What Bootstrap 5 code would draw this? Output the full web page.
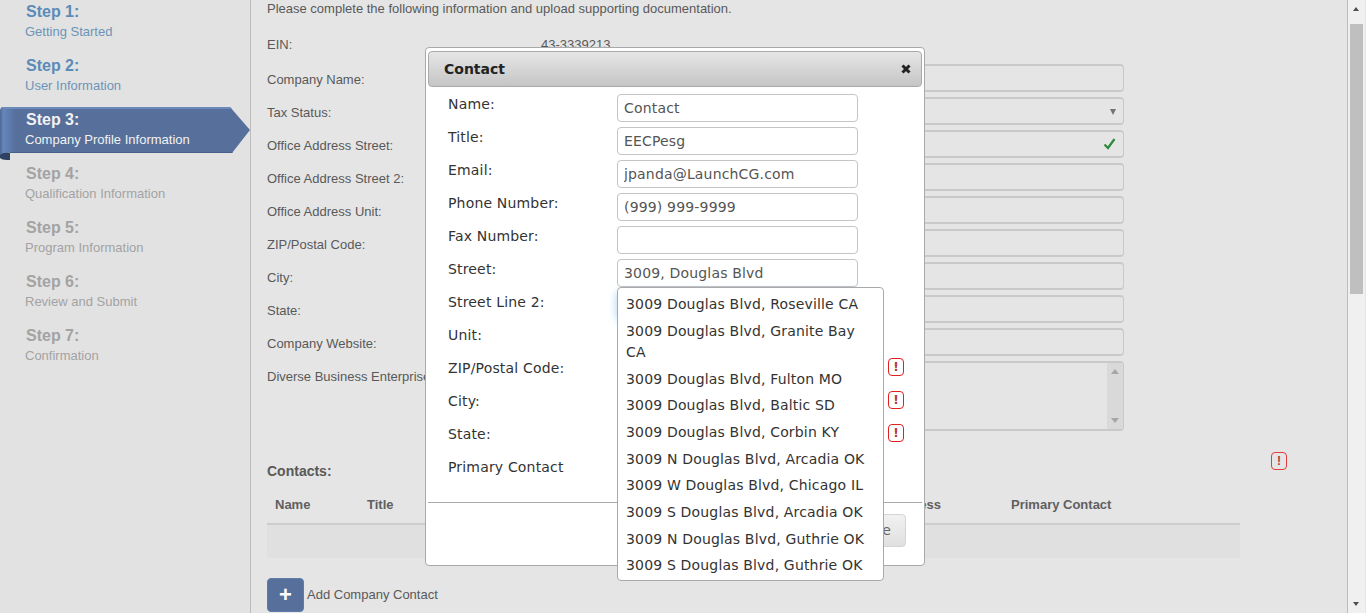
<!DOCTYPE html>
<html lang="en">
<head>
  <meta charset="UTF-8">
  <title>Company Profile Information</title>
  <link href="https://cdn.jsdelivr.net/npm/bootstrap@5.3.0/dist/css/bootstrap.min.css" rel="stylesheet">
  <style>
    html, body { height: 100%; }
    body {
      background: #e5e5e5;
      color: #595959;
      font-family: "Liberation Sans", Arial, sans-serif;
      font-size: 13px;
      overflow: hidden;
    }
    .page-shell { height: 613px; overflow: hidden; }

    /* left wizard */
    .wizard-side {
      width: 251px;
      flex: none;
      background: #e2e2e2;
      border-right: 1px solid #bcbcbc;
    }
    .wizard-step {
      height: 46px;
      margin-bottom: 8px;
      padding: 4px 0 0 25px;
      color: #a3a3a3;
      position: relative;
    }
    .wizard-step:first-child { margin-top: -1px; }
    .wizard-step b { display: block; font-size: 16px; line-height: 18px; padding-left: 1px; }
    .wizard-step span { display: block; font-size: 13px; line-height: 18px; margin-top: 2px; }
    .wizard-step.is-done b { color: #5b8bb8; }
    .wizard-step.is-done span { color: #6d94b8; }
    .wizard-step.is-active { color: #f2f2f2; width: 251px; }
    .wizard-step.is-active > * { position: relative; }
    .wizard-step.is-active svg { position: absolute; left: 0; top: 0; }

    /* form behind the dialog */
    .form-area { width: 1097px; flex: none; padding: 0 16px; border-right: 1px solid #bcbcbc; position: relative; }
    .intro-line { line-height: 16px; margin: 0 0 18px; padding-top: 1px; }
    .ein-row { height: 16px; margin-bottom: 13px; }
    .ein-value { padding-left: 6px; }
    .field-row { height: 28px; margin-bottom: 5px; width: 857px; }
    .field-label { width: 268px; flex: none; padding-top: 4px; }
    .field-box {
      height: 28px;
      padding: 0 6px;
      background: transparent;
      border: 1px solid #c9c9c9;
      border-width: 2px 1px 2px 1px;
      border-radius: 4px;
      font-size: 13px;
      position: relative;
      flex: 1;
    }
    .area-row { height: 70px; width: 857px; }
    .area-row .field-label { padding-top: 6px; white-space: nowrap; }
    .area-box { height: 70px; padding: 0; display: flex; justify-content: flex-end; }
    .area-scroll { width: 16px; background: #d9d9d9; display: flex; flex-direction: column; justify-content: space-between; align-items: center; padding: 6px 0; }
    .tiny-up { width: 0; height: 0; border: 4px solid transparent; border-top: 0; border-bottom: 5px solid #a6a6a6; }
    .tiny-down { width: 0; height: 0; border: 4px solid transparent; border-bottom: 0; border-top: 5px solid #a6a6a6; }
    .select-arrow { position: absolute; right: 7px; top: 10px; width: 0; height: 0; border: 3.5px solid transparent; border-bottom: 0; border-top: 6px solid #737373; }
    .ok-mark { position: absolute; right: 7px; top: 5px; }

    .contacts-title { font-weight: 700; font-size: 14px; line-height: 16px; margin: 32px 0 17px; }
    .contacts-table { width: 973px; margin: 0; table-layout: fixed; --bs-table-bg: transparent; }
    .contacts-table th {
      color: #5f5f5f;
      font-size: 13px;
      line-height: 16px;
      padding: 1px 8px 10px;
      border-bottom: 2px solid #cdcdcd;
    }
    .contacts-table td { height: 34px; background: #e0e0e0; border: 0; padding: 0; }
    .add-row { margin-top: 20px; }
    .add-btn {
      width: 37px;
      height: 34px;
      padding: 0;
      background: #56709b;
      border: 1px solid #5f7ca8;
      border-radius: 4px;
      color: #fff;
      font-size: 22px;
      font-weight: 700;
      line-height: 30px;
    }
    .add-label { margin-left: 3px; }
    .alert-mark {
      width: 16px;
      height: 18px;
      flex: none;
      border: 1px solid #e11f1f;
      border-radius: 4px;
      color: #b23a3a;
      font-size: 12px;
      font-weight: 700;
      line-height: 16px;
      text-align: center;
      display: block;
    }
    .contacts-alert { position: absolute; left: 1020px; top: 452px; border-color: #e33d3d; }

    /* page scrollbar */
    .page-scroll { width: 17px; flex: none; background: #f0f0f0; padding: 24px 2px 0; position: relative; }
    .page-thumb { height: 270px; background: #bfbfbf; }
    .page-scroll-up { position: absolute; left: 5px; top: 7px; width: 0; height: 0; border: 3.5px solid transparent; border-top: 0; border-bottom: 4px solid #505050; }
    .page-scroll-down { position: absolute; left: 5px; bottom: 7px; width: 0; height: 0; border: 3.5px solid transparent; border-bottom: 0; border-top: 4px solid #505050; }

    /* dialog */
    .contact-dialog {
      position: absolute;
      left: 425px;
      top: 47px;
      width: 500px;
      height: 519px;
      background: #fff;
      border: 1px solid #a9a9a9;
      border-radius: 4px;
      padding: 3px 2px;
      font-family: "DejaVu Sans", Verdana, sans-serif;
      color: #333;
    }
    .dialog-head {
      height: 36px;
      padding: 0 10px 0 15px;
      background: linear-gradient(#e6e6e6, #c5c5c5);
      border: 1px solid #a9a9a9;
      border-radius: 4px;
      color: #222;
      font-size: 14px;
      font-weight: 700;
    }
    .dialog-close { width: 10px; height: 10px; }
    .dialog-body { padding: 7px 0 0 20px; height: 416px; border-bottom: 1px solid #a9a9a9; }
    .dialog-row { height: 28px; margin-bottom: 5px; }
    .dialog-row label { width: 169px; flex: none; font-size: 14px; letter-spacing: .17px; line-height: 20px; align-self: flex-start; color: #333; }
    .dialog-input {
      width: 241px;
      height: 28px;
      flex: none;
      padding: 0 6px;
      border: 1px solid #c4c4c4;
      border-radius: 4px;
      color: #555;
      font-size: 14px;
      letter-spacing: .17px;
      font-family: "DejaVu Sans", Verdana, sans-serif;
    }
    .dialog-input.is-focused { box-shadow: 0 0 8px rgba(102, 175, 233, .6); border-color: #66afe9; }
    .dialog-alert { margin-left: 30px; }
    .dialog-foot { padding: 11px 16px 0 0; }
    .save-btn {
      width: 65px;
      height: 33px;
      padding: 0;
      background: linear-gradient(#f1f1f1, #e0e0e0);
      border: 1px solid #d4d4d4;
      border-radius: 4px;
      color: #666;
      font-size: 14px;
      letter-spacing: .17px;
      font-family: "DejaVu Sans", Verdana, sans-serif;
    }

    /* address suggestions */
    .address-menu {
      position: absolute;
      left: 617px;
      top: 287px;
      width: 267px;
      height: 294px;
      padding-top: 3.6px;
      background: #fff;
      border: 1px solid #a9a9a9;
      border-radius: 4px;
      --bs-list-group-border-width: 0;
      --bs-list-group-bg: transparent;
    }
    .address-menu .list-group-item {
      padding: 2.83px 8px;
      color: #333;
      font-family: "DejaVu Sans", Verdana, sans-serif;
      font-size: 14px;
      letter-spacing: .17px;
      line-height: 21px;
    }
  </style>
</head>
<body>
  <div class="page-shell d-flex">
    <div class="wizard-side">
      <div class="wizard-step is-done"><b>Step 1:</b><span>Getting Started</span></div>
      <div class="wizard-step is-done"><b>Step 2:</b><span>User Information</span></div>
      <div class="wizard-step is-active">
        <svg width="251" height="54" viewBox="0 0 251 54">
          <defs>
            <linearGradient id="ribbonFill" x1="0" x2="16" y1="0" y2="0" gradientUnits="userSpaceOnUse">
              <stop offset="0" stop-color="#4d6695"/>
              <stop offset=".2" stop-color="#6686bd"/>
              <stop offset="1" stop-color="#566f9b"/>
            </linearGradient>
          </defs>
          <path d="M0 47C3 45 8 45 10 46V53C6 53 2 53 0 51Z" fill="#2f4160"/>
          <path d="M0 4C0 2 1 0 3 0H230L250 23L232 46H10C6 45 2 46 0 48Z" fill="url(#ribbonFill)"/>
          <path d="M3 0H230L232 2H3Z" fill="#6b89ba"/>
          <path d="M10 45H233L232 46H10Z" fill="#46608c"/>
        </svg>
        <b>Step 3:</b><span>Company Profile Information</span>
      </div>
      <div class="wizard-step"><b>Step 4:</b><span>Qualification Information</span></div>
      <div class="wizard-step"><b>Step 5:</b><span>Program Information</span></div>
      <div class="wizard-step"><b>Step 6:</b><span>Review and Submit</span></div>
      <div class="wizard-step"><b>Step 7:</b><span>Confirmation</span></div>
    </div>

    <div class="form-area">
      <p class="intro-line">Please complete the following information and upload supporting documentation.</p>
      <div class="ein-row d-flex"><div class="field-label p-0">EIN:</div><div class="ein-value">43-3339213</div></div>
      <div class="field-row d-flex align-items-center"><div class="field-label">Company Name:</div><div class="field-box form-control"></div></div>
      <div class="field-row d-flex align-items-center"><div class="field-label">Tax Status:</div><div class="field-box form-control"><i class="select-arrow"></i></div></div>
      <div class="field-row d-flex align-items-center"><div class="field-label">Office Address Street:</div>
        <div class="field-box form-control">
          <svg class="ok-mark" width="13" height="13" viewBox="0 0 13 13"><path d="M1.5 7.5L5 11L11.5 2" fill="none" stroke="#2e8b3d" stroke-width="2.2"/></svg>
        </div>
      </div>
      <div class="field-row d-flex align-items-center"><div class="field-label">Office Address Street 2:</div><div class="field-box form-control"></div></div>
      <div class="field-row d-flex align-items-center"><div class="field-label">Office Address Unit:</div><div class="field-box form-control"></div></div>
      <div class="field-row d-flex align-items-center"><div class="field-label">ZIP/Postal Code:</div><div class="field-box form-control"></div></div>
      <div class="field-row d-flex align-items-center"><div class="field-label">City:</div><div class="field-box form-control"></div></div>
      <div class="field-row d-flex align-items-center"><div class="field-label">State:</div><div class="field-box form-control"></div></div>
      <div class="field-row d-flex align-items-center"><div class="field-label">Company Website:</div><div class="field-box form-control"></div></div>
      <div class="area-row d-flex"><div class="field-label">Diverse Business Enterprise:</div>
        <div class="field-box area-box form-control"><div class="area-scroll"><i class="tiny-up"></i><i class="tiny-down"></i></div></div>
      </div>

      <div class="contacts-title">Contacts:</div>
      <table class="table contacts-table">
        <thead>
          <tr>
            <th style="width:92px">Name</th><th style="width:172px">Title</th><th style="width:172px">Email</th>
            <th style="width:178px">Phone</th><th style="width:122px">Address</th><th>Primary Contact</th>
          </tr>
        </thead>
        <tbody><tr><td colspan="6"></td></tr></tbody>
      </table>
      <div class="add-row d-flex align-items-center">
        <button type="button" class="btn add-btn">+</button>
        <span class="add-label">Add Company Contact</span>
      </div>
      <i class="alert-mark contacts-alert fst-normal">!</i>
    </div>

    <div class="page-scroll">
      <i class="page-scroll-up"></i>
      <div class="page-thumb"></div>
      <i class="page-scroll-down"></i>
    </div>
  </div>

  <div class="contact-dialog">
    <div class="dialog-head d-flex align-items-center justify-content-between">
      <span>Contact</span>
      <svg class="dialog-close" viewBox="0 0 10 10"><path d="M1.5 1.5L8.5 8.5M8.5 1.5L1.5 8.5" stroke="#222" stroke-width="3"/></svg>
    </div>
    <div class="dialog-body">
      <div class="dialog-row d-flex"><label>Name:</label><input class="dialog-input" value="Contact"></div>
      <div class="dialog-row d-flex"><label>Title:</label><input class="dialog-input" value="EECPesg"></div>
      <div class="dialog-row d-flex"><label>Email:</label><input class="dialog-input" value="jpanda@LaunchCG.com"></div>
      <div class="dialog-row d-flex"><label>Phone Number:</label><input class="dialog-input" value="(999) 999-9999"></div>
      <div class="dialog-row d-flex"><label>Fax Number:</label><input class="dialog-input"></div>
      <div class="dialog-row d-flex"><label>Street:</label><input class="dialog-input" value="3009, Douglas Blvd"></div>
      <div class="dialog-row d-flex"><label>Street Line 2:</label><input class="dialog-input is-focused"></div>
      <div class="dialog-row d-flex"><label>Unit:</label><input class="dialog-input"></div>
      <div class="dialog-row d-flex"><label>ZIP/Postal Code:</label><input class="dialog-input"><i class="alert-mark dialog-alert fst-normal">!</i></div>
      <div class="dialog-row d-flex"><label>City:</label><input class="dialog-input"><i class="alert-mark dialog-alert fst-normal">!</i></div>
      <div class="dialog-row d-flex"><label>State:</label><input class="dialog-input"><i class="alert-mark dialog-alert fst-normal">!</i></div>
      <div class="dialog-row d-flex"><label>Primary Contact</label></div>
    </div>
    <div class="dialog-foot d-flex justify-content-end">
      <button type="button" class="btn save-btn">Save</button>
    </div>
  </div>

  <ul class="list-group address-menu">
    <li class="list-group-item">3009 Douglas Blvd, Roseville CA</li>
    <li class="list-group-item">3009 Douglas Blvd, Granite Bay CA</li>
    <li class="list-group-item">3009 Douglas Blvd, Fulton MO</li>
    <li class="list-group-item">3009 Douglas Blvd, Baltic SD</li>
    <li class="list-group-item">3009 Douglas Blvd, Corbin KY</li>
    <li class="list-group-item">3009 N Douglas Blvd, Arcadia OK</li>
    <li class="list-group-item">3009 W Douglas Blvd, Chicago IL</li>
    <li class="list-group-item">3009 S Douglas Blvd, Arcadia OK</li>
    <li class="list-group-item">3009 N Douglas Blvd, Guthrie OK</li>
    <li class="list-group-item">3009 S Douglas Blvd, Guthrie OK</li>
  </ul>

  <script src="https://cdn.jsdelivr.net/npm/bootstrap@5.3.0/dist/js/bootstrap.bundle.min.js"></script>
</body>
</html>
